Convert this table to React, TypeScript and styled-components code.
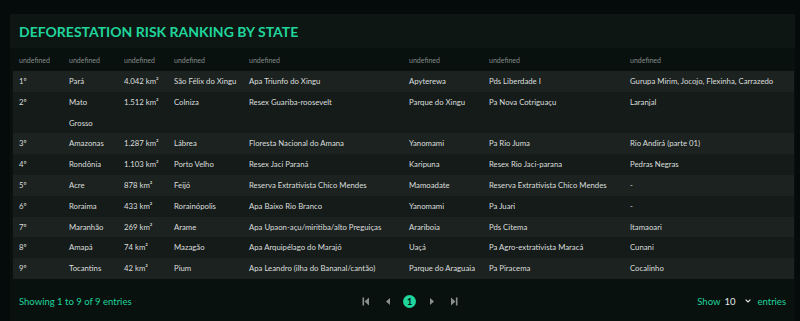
import React from "react";
import styled, { createGlobalStyle } from "styled-components";

const GlobalStyle = createGlobalStyle`
  html, body {
    margin: 0;
    padding: 0;
    background: #050b0a;
    font-family: "Lato", "Liberation Sans", sans-serif;
  }
`;

interface Row {
  rank: string;
  state: string;
  area: string;
  city: string;
  unit: string;
  indigenous: string;
  settlement: string;
  quilombo: string;
}

const rows: Row[] = [
  { rank: "1º", state: "Pará", area: "4.042 km²", city: "São Félix do Xingu", unit: "Apa Triunfo do Xingu", indigenous: "Apyterewa", settlement: "Pds Liberdade I", quilombo: "Gurupa Mirim, Jocojo, Flexinha, Carrazedo" },
  { rank: "2º", state: "Mato Grosso", area: "1.512 km²", city: "Colniza", unit: "Resex Guariba-roosevelt", indigenous: "Parque do Xingu", settlement: "Pa Nova Cotriguaçu", quilombo: "Laranjal" },
  { rank: "3º", state: "Amazonas", area: "1.287 km²", city: "Lábrea", unit: "Floresta Nacional do Amana", indigenous: "Yanomami", settlement: "Pa Rio Juma", quilombo: "Rio Andirá (parte 01)" },
  { rank: "4º", state: "Rondônia", area: "1.103 km²", city: "Porto Velho", unit: "Resex Jaci Paraná", indigenous: "Karipuna", settlement: "Resex Rio Jaci-parana", quilombo: "Pedras Negras" },
  { rank: "5º", state: "Acre", area: "878 km²", city: "Feijó", unit: "Reserva Extrativista Chico Mendes", indigenous: "Mamoadate", settlement: "Reserva Extrativista Chico Mendes", quilombo: "-" },
  { rank: "6º", state: "Roraima", area: "433 km²", city: "Rorainópolis", unit: "Apa Baixo Rio Branco", indigenous: "Yanomami", settlement: "Pa Juari", quilombo: "-" },
  { rank: "7º", state: "Maranhão", area: "269 km²", city: "Arame", unit: "Apa Upaon-açu/miritiba/alto Preguiças", indigenous: "Arariboia", settlement: "Pds Citema", quilombo: "Itamaoari" },
  { rank: "8º", state: "Amapá", area: "74 km²", city: "Mazagão", unit: "Apa Arquipélago do Marajó", indigenous: "Uaçá", settlement: "Pa Agro-extrativista Maracá", quilombo: "Cunani" },
  { rank: "9º", state: "Tocantins", area: "42 km²", city: "Pium", unit: "Apa Leandro (ilha do Bananal/cantão)", indigenous: "Parque do Araguaia", settlement: "Pa Piracema", quilombo: "Cocalinho" },
];

const columnWidths = [50, 55, 50, 75, 160, 80, 141, 170];

const Page = styled.div`
  padding: 14px 5px 0 10px;
  height: 321px;
  box-sizing: border-box;
`;

const Card = styled.section`
  background: #09110f;
  height: 100%;
  display: flex;
  flex-direction: column;
`;

const TitleBar = styled.header`
  flex-shrink: 0;
  background: #0e1614;
  height: 34px;
  display: flex;
  align-items: center;
  padding-left: 9px;
`;

const Title = styled.h2`
  margin: 0;
  font-size: 14px;
  font-weight: 700;
  color: #1fd59b;
`;

const Table = styled.table`
  flex-shrink: 0;
  margin-left: 3px;
  width: 781px;
  border-collapse: collapse;
  table-layout: fixed;
`;

const HeadCell = styled.th`
  text-align: left;
  font-weight: 400;
  font-size: 7px;
  color: #858b89;
  height: 23px;
  padding: 0 6px;
  white-space: nowrap;
`;

const BodyRow = styled.tr<{ $odd: boolean }>`
  background: ${({ $odd }) => ($odd ? "#1b2220" : "#141b19")};
`;

const Cell = styled.td<{ $wrap?: boolean }>`
  font-size: 7.75px;
  color: #dcdfde;
  line-height: 20.8px;
  padding: 0 ${({ $wrap }) => ($wrap ? "10px" : "2px")} 0 6px;
  vertical-align: top;
  white-space: ${({ $wrap }) => ($wrap ? "normal" : "nowrap")};
`;

const Footer = styled.footer`
  flex: 1;
  display: grid;
  grid-template-columns: 1fr auto 1fr;
  align-items: center;
  padding: 3px 9px 0 9px;
  font-size: 9.5px;
`;

const Info = styled.span`
  color: #1fd59b;
`;

const Pager = styled.nav`
  display: flex;
  align-items: center;
  gap: 9px;
  margin-left: 14px;
`;

const PageButton = styled.button<{ $active?: boolean }>`
  border: none;
  padding: 0;
  width: 13px;
  height: 13px;
  border-radius: 50%;
  display: flex;
  align-items: center;
  justify-content: center;
  font-family: inherit;
  font-size: 9px;
  font-weight: 700;
  background: ${({ $active }) => ($active ? "#1fd59b" : "transparent")};
  color: ${({ $active }) => ($active ? "#06100d" : "#8a8f8d")};
`;

const Length = styled.div`
  justify-self: end;
  display: flex;
  align-items: center;
  gap: 4px;
  color: #1fd59b;
`;

const Select = styled.span`
  display: flex;
  align-items: center;
  gap: 10px;
  color: #e6e8e7;
  margin-right: 2px;
`;

const Chevron = () => (
  <svg width="6" height="4" viewBox="0 0 6 4">
    <path d="M0.6 0.6 L3 3 L5.4 0.6" stroke="#e6e8e7" strokeWidth="1.1" fill="none" />
  </svg>
);

const Arrow = ({ dir, bar }: { dir: "left" | "right"; bar?: boolean }) => (
  <svg width="8" height="9" viewBox="0 0 8 9" fill="#8a8f8d">
    {dir === "left" ? (
      <>
        {bar && <rect x="0.5" y="0.5" width="1.6" height="8" />}
        <path d={bar ? "M7 0.5 L2.6 4.5 L7 8.5 Z" : "M6 1 L2 4.5 L6 8 Z"} />
      </>
    ) : (
      <>
        <path d={bar ? "M1 0.5 L5.4 4.5 L1 8.5 Z" : "M2 1 L6 4.5 L2 8 Z"} />
        {bar && <rect x="5.9" y="0.5" width="1.6" height="8" />}
      </>
    )}
  </svg>
);

export default function App() {
  return (
    <>
      <GlobalStyle />
      <Page>
        <Card>
          <TitleBar>
            <Title>DEFORESTATION RISK RANKING BY STATE</Title>
          </TitleBar>
          <Table>
            <colgroup>
              {columnWidths.map((w, i) => (
                <col key={i} style={{ width: w }} />
              ))}
            </colgroup>
            <thead>
              <tr>
                {columnWidths.map((_, i) => (
                  <HeadCell key={i}>undefined</HeadCell>
                ))}
              </tr>
            </thead>
            <tbody>
              {rows.map((r, i) => (
                <BodyRow key={r.rank} $odd={i % 2 === 0}>
                  <Cell>{r.rank}</Cell>
                  <Cell $wrap>{r.state}</Cell>
                  <Cell>{r.area}</Cell>
                  <Cell>{r.city}</Cell>
                  <Cell>{r.unit}</Cell>
                  <Cell>{r.indigenous}</Cell>
                  <Cell>{r.settlement}</Cell>
                  <Cell>{r.quilombo}</Cell>
                </BodyRow>
              ))}
            </tbody>
          </Table>
          <Footer>
            <Info>Showing 1 to 9 of 9 entries</Info>
            <Pager>
              <PageButton aria-label="first"><Arrow dir="left" bar /></PageButton>
              <PageButton aria-label="previous"><Arrow dir="left" /></PageButton>
              <PageButton $active>1</PageButton>
              <PageButton aria-label="next"><Arrow dir="right" /></PageButton>
              <PageButton aria-label="last"><Arrow dir="right" bar /></PageButton>
            </Pager>
            <Length>
              Show
              <Select>
                10
                <Chevron />
              </Select>
              entries
            </Length>
          </Footer>
        </Card>
      </Page>
    </>
  );
}
